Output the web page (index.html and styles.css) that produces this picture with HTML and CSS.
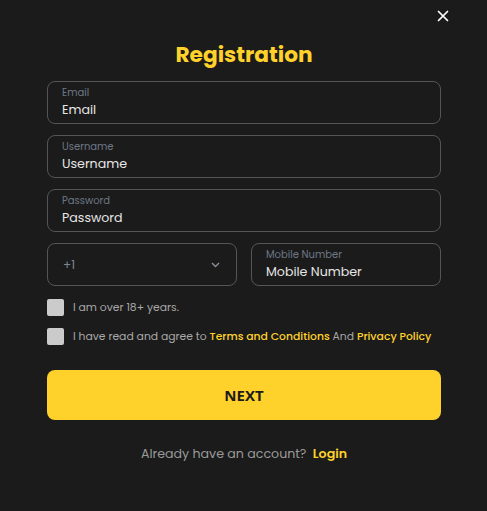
FILE: index.html
```html
<!DOCTYPE html>
<html>
<head>
<meta charset="utf-8">
<link rel="stylesheet" href="styles.css">
</head>
<body>
<div class="modal">
  <button class="close" aria-label="Close">
    <svg width="12" height="12" viewBox="0 0 12 12"><path d="M1.5 1.5L10.5 10.5M10.5 1.5L1.5 10.5" stroke="#fff" stroke-width="1.7" stroke-linecap="round"/></svg>
  </button>
  <h1 class="title">Registration</h1>
  <div class="form">
    <div class="field"><span class="label">Email</span><span class="value">Email</span></div>
    <div class="field"><span class="label">Username</span><span class="value">Username</span></div>
    <div class="field"><span class="label">Password</span><span class="value">Password</span></div>
    <div class="row">
      <div class="field select"><span class="code">+1</span>
        <svg width="9" height="6" viewBox="0 0 9 6"><path d="M1 1L4.5 4.5L8 1" fill="none" stroke="#8a8f96" stroke-width="1.4"/></svg>
      </div>
      <div class="field"><span class="label">Mobile Number</span><span class="value">Mobile Number</span></div>
    </div>
  </div>
  <div class="checks">
    <label class="check"><span class="box"></span><span>I am over 18+ years.</span></label>
    <label class="check"><span class="box"></span><span>I have read and agree to <b class="hl">Terms and Conditions</b> And <b class="hl">Privacy Policy</b></span></label>
  </div>
  <button class="next">NEXT</button>
  <p class="login">Already have an account? <b class="hl">Login</b></p>
</div>
</body>
</html>
```
FILE: styles.css
```css
* { box-sizing: border-box; }
html, body { margin: 0; padding: 0; }
body {
  background: #1b1b1b;
  width: 487px;
  height: 511px;
  font-family: "Poppins", "Open Sans", sans-serif;
  color: #ddd;
}
.modal {
  position: relative;
  padding: 39px 46px 0 47px;
}
.close {
  position: absolute;
  top: 10px;
  right: 38px;
  background: none;
  border: 0;
  padding: 0;
  width: 12px;
  height: 12px;
  display: flex;
}
.title {
  margin: 0;
  text-align: center;
  color: #ffd22b;
  font-size: 21.7px;
  line-height: 31px;
  font-weight: 700;
}
.form {
  margin-top: 11px;
  display: flex;
  flex-direction: column;
  gap: 11px;
}
.field {
  height: 43px;
  border: 1px solid #555;
  border-radius: 8px;
  padding: 4px 14px 0 14px;
  display: flex;
  flex-direction: column;
  min-width: 0;
}
.label {
  font-size: 10px;
  line-height: 13px;
  color: #6d7886;
}
.value {
  margin-top: 1px;
  font-size: 12.6px;
  line-height: 20px;
  color: #e6e6e6;
}
.row {
  display: grid;
  grid-template-columns: 1fr 1fr;
  gap: 14px;
}
.select {
  flex-direction: row;
  align-items: center;
  justify-content: space-between;
  padding: 0 16px 0 15px;
}
.code {
  font-size: 12px;
  color: #7d8796;
}
.checks {
  margin-top: 13px;
  display: flex;
  flex-direction: column;
  gap: 12px;
}
.check {
  display: flex;
  align-items: center;
  gap: 9px;
  font-size: 10.8px;
  color: #a8a8a8;
  height: 17px;
}
.box {
  width: 17px;
  height: 17px;
  border-radius: 2px;
  background: #cbcbcb;
  flex: none;
}
.hl { color: #ffd22b; font-weight: 500; }
.next {
  margin-top: 25px;
  width: 100%;
  height: 50px;
  border: 0;
  border-radius: 8px;
  background: #ffd22b;
  color: #1b1b1b;
  font-family: "Open Sans", sans-serif;
  font-weight: 700;
  font-size: 15px;
}
.login {
  margin: 25px 0 0;
  text-align: center;
  font-size: 12.6px;
  color: #9a9a9a;
}
.login .hl { margin-left: 3px; font-weight: 600; }
```
